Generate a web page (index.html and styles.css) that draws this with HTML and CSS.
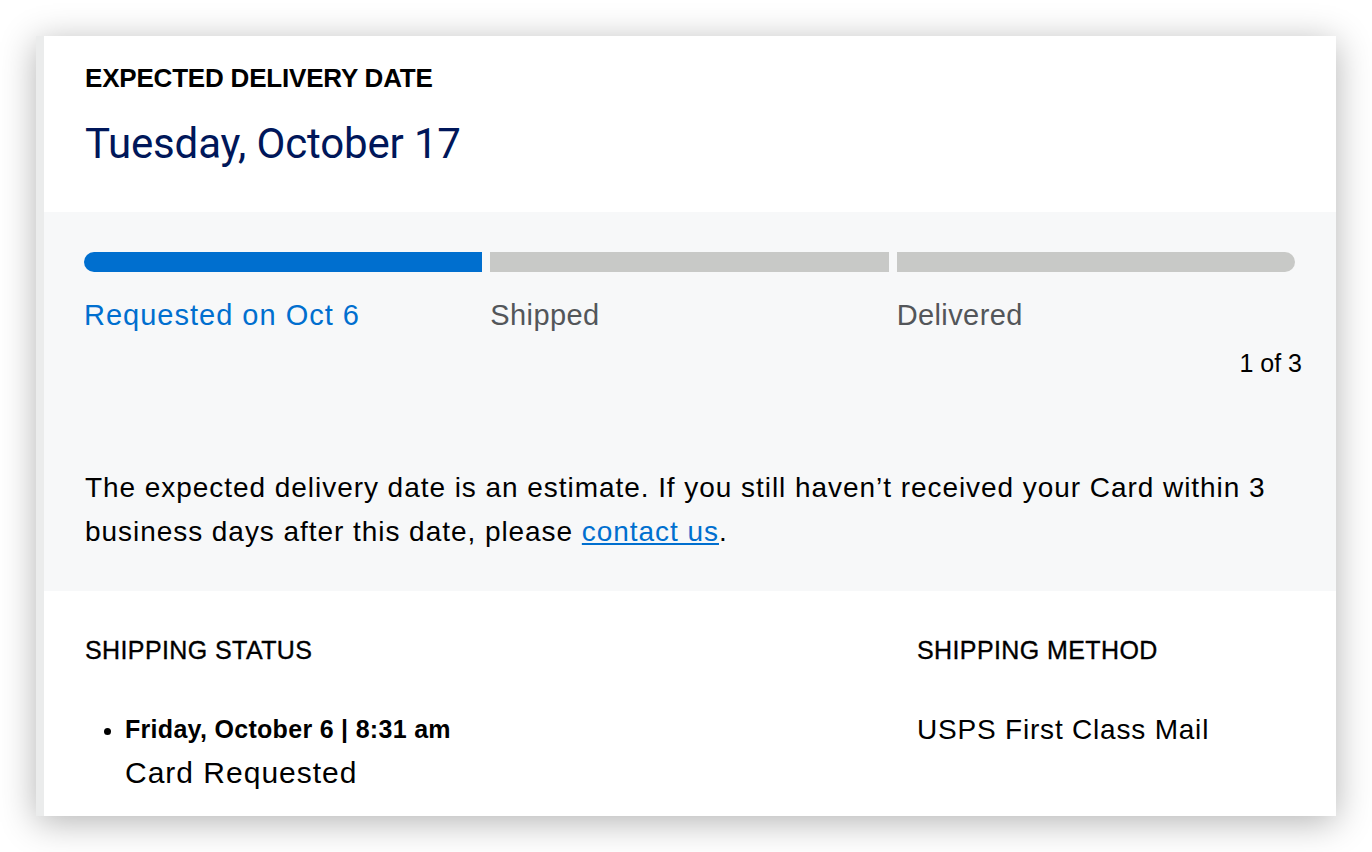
FILE: index.html
```html
<!DOCTYPE html>
<html lang="en">
<head>
<meta charset="utf-8">
<title>Card Delivery</title>
<link rel="stylesheet" href="styles.css">
</head>
<body>
<div class="page">
  <div class="card">
    <section class="top">
      <h2 class="eyebrow">EXPECTED DELIVERY DATE</h2>
      <div class="date">Tuesday, October 17</div>
    </section>
    <section class="progress">
      <div class="bars">
        <div class="bar bar-active"></div>
        <div class="bar"></div>
        <div class="bar bar-last"></div>
      </div>
      <div class="steps">
        <div class="step step-active">Requested on Oct 6</div>
        <div class="step">Shipped</div>
        <div class="step">Delivered</div>
      </div>
      <div class="count">1 of 3</div>
      <p class="note">The expected delivery date is an estimate. If you still haven’t received your Card within 3 business days after this date, please <a href="#" class="link">contact us</a>.</p>
    </section>
    <section class="details">
      <div class="col">
        <h3 class="subhead">SHIPPING STATUS</h3>
        <ul class="status-list">
          <li>
            <div class="status-date">Friday, October 6 | 8:31 am</div>
            <div class="status-text">Card Requested</div>
          </li>
        </ul>
      </div>
      <div class="col">
        <h3 class="subhead">SHIPPING METHOD</h3>
        <div class="method">USPS First Class Mail</div>
      </div>
    </section>
  </div>
</div>
</body>
</html>
```

FILE: styles.css
```css
* { box-sizing: border-box; }
html, body { margin: 0; padding: 0; background: #ffffff; }
body { font-family: "Liberation Sans", Arial, sans-serif; color: #000; }

.page { padding: 36px 0 0 36px; width: 1372px; height: 852px; }

.card {
  width: 1300px;
  background: #fff;
  border-left: 8px solid #ebecec;
  box-shadow: 0 6px 34px rgba(0,0,0,0.30);
}

.top { height: 176px; padding: 27px 41px 0; }
.eyebrow { margin: 0; font-size: 26px; line-height: 30px; font-weight: 700; letter-spacing: -0.2px; }
.date {
  margin-top: 26px;
  font-family: Roboto, "Liberation Sans", sans-serif;
  font-size: 42px; line-height: 50px; color: #00175a; font-weight: 400; letter-spacing: -0.15px;
}

.progress { background: #f7f8f9; padding: 40px 41px 37px 40px; }
.bars { display: grid; grid-template-columns: 1fr 1fr 1fr; gap: 8px; }
.bar { height: 20px; background: #c8c9c7; }
.bar-active { background: #006fcf; border-radius: 10px 0 0 10px; }
.bar-last { border-radius: 0 10px 10px 0; }

.steps { display: grid; grid-template-columns: 1fr 1fr 1fr; gap: 8px; margin-top: 25px; }
.step { font-size: 29px; line-height: 36px; color: #53565a; letter-spacing: 0.4px; }
.step-active { color: #006fcf; letter-spacing: 1px; }

.count { margin: 15px -7px 0 0; text-align: right; font-size: 25px; line-height: 30px; }

.note { margin: 88px 0 0 1px; font-size: 28px; line-height: 44px; letter-spacing: 0.95px; }
.link { color: #006fcf; text-decoration: underline; }

.details { display: grid; grid-template-columns: 832px 1fr; padding: 44px 41px 23px; }
.subhead { margin: 0; font-size: 25px; line-height: 30px; font-weight: 400; -webkit-text-stroke: 0.35px #000; letter-spacing: 0.4px; }
.status-list { margin: 49px 0 0; padding-left: 40px; font-size: 24px; }
.status-date { font-size: 25px; line-height: 30px; font-weight: 700; letter-spacing: 0.3px; }
.status-text { margin-top: 9px; font-size: 30px; line-height: 40px; letter-spacing: 1px; }
.method { margin-top: 47px; font-size: 28px; line-height: 36px; letter-spacing: 0.8px; }
```
